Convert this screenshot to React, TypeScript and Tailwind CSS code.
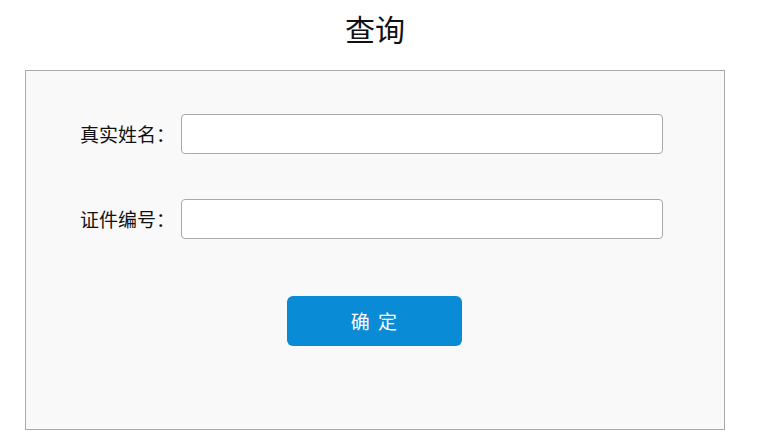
import React, { useState } from "react";

const fontStack = {
  fontFamily: '"Noto Sans CJK SC", "Noto Sans", sans-serif',
};

type FieldProps = {
  label: string;
  value: string;
  onChange: (value: string) => void;
};

function Field({ label, value, onChange }: FieldProps) {
  return (
    <div className="flex items-center">
      <label className="w-[149px] shrink-0 text-right text-[19px] leading-[40px] text-[#111]">
        {label}
      </label>
      <input
        type="text"
        value={value}
        onChange={(e) => onChange(e.target.value)}
        className="ml-[6px] h-[40px] w-[482px] rounded-[4px] border border-[#a9a9a9] bg-white px-2 text-[16px] outline-none"
      />
    </div>
  );
}

export default function App() {
  const [name, setName] = useState("");
  const [idNumber, setIdNumber] = useState("");

  return (
    <div className="min-h-[446px] w-[750px] bg-white" style={fontStack}>
      <h1 className="h-[57px] text-center text-[30px] leading-[57px] text-[#111]">
        查询
      </h1>

      <div className="ml-[25px] mt-[13px] h-[360px] w-[700px] border border-[#a9a9a9] bg-[#f9f9f9] pt-[43px]">
        <div className="flex flex-col gap-[45px]">
          <Field label="真实姓名：" value={name} onChange={setName} />
          <Field label="证件编号：" value={idNumber} onChange={setIdNumber} />
        </div>

        <div className="mt-[57px] flex justify-center pr-[2px]">
          <button
            type="button"
            className="h-[50px] w-[175px] rounded-[6px] bg-[#0a8bd5] pl-[2px] text-[19px] tracking-[2px] text-white"
          >
            确 定
          </button>
        </div>
      </div>
    </div>
  );
}
